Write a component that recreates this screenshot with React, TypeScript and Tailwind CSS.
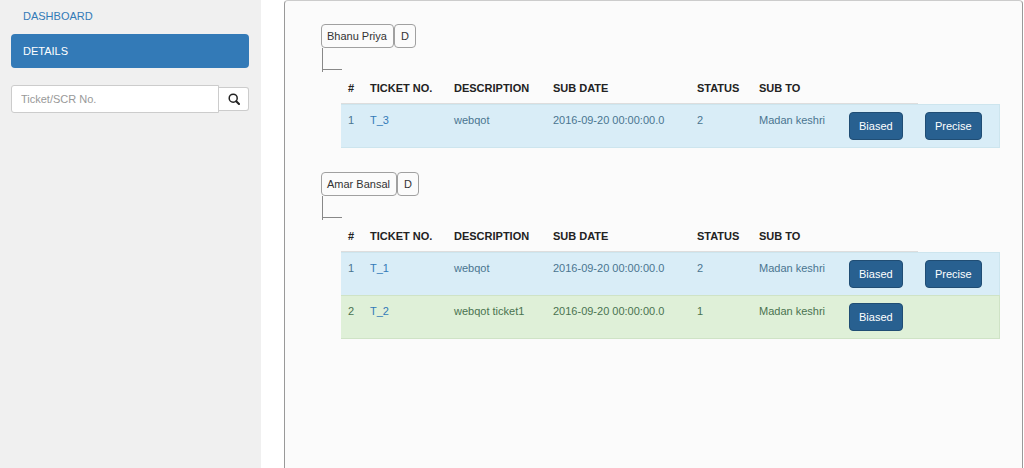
import React from "react";

type Ticket = {
  id: string;
  description: string;
  date: string;
  status: number;
  to: string;
  tone: "info" | "success";
  actions: string[];
};

type Group = { owner: string; tickets: Ticket[] };

const groups: Group[] = [
  {
    owner: "Bhanu Priya",
    tickets: [
      { id: "T_3", description: "webqot", date: "2016-09-20 00:00:00.0", status: 2, to: "Madan keshri", tone: "info", actions: ["Biased", "Precise"] },
    ],
  },
  {
    owner: "Amar Bansal",
    tickets: [
      { id: "T_1", description: "webqot", date: "2016-09-20 00:00:00.0", status: 2, to: "Madan keshri", tone: "info", actions: ["Biased", "Precise"] },
      { id: "T_2", description: "webqot ticket1", date: "2016-09-20 00:00:00.0", status: 1, to: "Madan keshri", tone: "success", actions: ["Biased"] },
    ],
  },
];

const headings = ["#", "TICKET NO.", "DESCRIPTION", "SUB DATE", "STATUS", "SUB TO", ""];

const tones = {
  info: "bg-[#d9edf7] text-[#4a7590] *:border-[#cde5ee]",
  success: "bg-[#dff0d8] text-[#4a7350] *:border-[#cfe3c6]",
};

function Action({ label }: { label?: string }) {
  return (
    <td className="border-t px-[7px] py-[7px] align-top last:border-r">
      {label && (
        <button
          type="button"
          className="block h-[28px] rounded-[4px] border border-[#204d74] bg-[#286090] px-[9px] text-[11px] leading-4 text-white"
        >
          {label}
        </button>
      )}
    </td>
  );
}

function TicketGroup({ group }: { group: Group }) {
  return (
    <section>
      <div className="flex leading-4 text-[#333]">
        <span className="h-6 rounded-[4px] border border-[#a0a0a0] pt-[3px] pr-[6px] pl-[5px]">{group.owner}</span>
        <span className="h-6 rounded-[4px] border border-[#a0a0a0] px-[6px] pt-[3px]">D</span>
      </div>
      <div className="ml-px h-6 w-5 border-l border-[#888]">
        <div className="h-[22px] border-b border-[#888]" />
      </div>
      <div className="pl-[20px]">
        <table className="w-full table-fixed border-separate border-spacing-0 text-left leading-4">
          <colgroup>
            <col className="w-[22px]" />
            <col className="w-[84px]" />
            <col className="w-[99px]" />
            <col className="w-[144px]" />
            <col className="w-[62px]" />
            <col className="w-[90px]" />
            <col className="w-[76px]" />
            <col />
          </colgroup>
          <thead>
            <tr>
              {headings.map((heading, i) => (
                <th key={i} className="h-[32px] border-b border-[#ddd] px-[7px] font-bold whitespace-nowrap text-[#222]">
                  {heading}
                </th>
              ))}
            </tr>
          </thead>
          <tbody>
            {group.tickets.map((ticket, i) => (
              <tr key={ticket.id} className={`${tones[ticket.tone]} *:whitespace-nowrap last:*:border-b`}>
                <td className="border-t px-[7px] py-[7px] align-top">{i + 1}</td>
                <td className="border-t px-[7px] py-[7px] align-top">
                  <a href="#ticket" className="text-[#337ab7]">{ticket.id}</a>
                </td>
                <td className="border-t px-[7px] py-[7px] align-top">{ticket.description}</td>
                <td className="border-t px-[7px] py-[7px] align-top">{ticket.date}</td>
                <td className="border-t px-[7px] py-[7px] align-top">{ticket.status}</td>
                <td className="border-t px-[7px] py-[7px] align-top">{ticket.to}</td>
                <Action label={ticket.actions[0]} />
                <Action label={ticket.actions[1]} />
              </tr>
            ))}
          </tbody>
        </table>
      </div>
    </section>
  );
}

export default function App() {
  return (
    <div className="flex min-h-screen bg-white font-['Liberation_Sans',Arial,sans-serif] text-[11px]">
      <aside className="w-[261px] shrink-0 bg-[#f0f0f0] pr-[12px] pl-[11px]">
        <nav className="flex flex-col gap-px leading-4">
          <a href="#dashboard" className="px-3 pt-2 pb-[9px] text-[#337ab7]">DASHBOARD</a>
          <a href="#details" className="rounded-[4px] bg-[#337ab7] px-3 py-[9px] text-white">DETAILS</a>
        </nav>
        <form className="mt-[17px] flex items-center" onSubmit={(e) => e.preventDefault()}>
          <input
            type="text"
            aria-label="Ticket/SCR No."
            placeholder="Ticket/SCR No."
            className="h-7 min-w-0 flex-1 rounded-l-[3px] border border-[#ccc] bg-white px-[9px] text-[#555] placeholder:text-[#999] placeholder:opacity-100"
          />
          <button
            type="submit"
            aria-label="Search"
            className="flex h-6 w-[30px] items-center justify-center rounded-r-[3px] border border-l-0 border-[#ccc] bg-white text-[#222]"
          >
            <svg viewBox="0 0 12 12" className="size-3" fill="none" stroke="currentColor">
              <circle cx="5.2" cy="5.2" r="4" strokeWidth="1.5" />
              <path d="M8.2 8.2 L11 11" strokeWidth="2" strokeLinecap="round" />
            </svg>
          </button>
        </form>
      </aside>
      <main className="mr-px ml-[23px] flex min-w-0 flex-1 flex-col gap-6 rounded-t-[4px] border border-b-0 border-[#999] border-t-[#ccc] bg-[#fbfbfb] pt-[23px] pr-[22px] pl-[36px]">
        {groups.map((group) => (
          <TicketGroup key={group.owner} group={group} />
        ))}
      </main>
    </div>
  );
}
